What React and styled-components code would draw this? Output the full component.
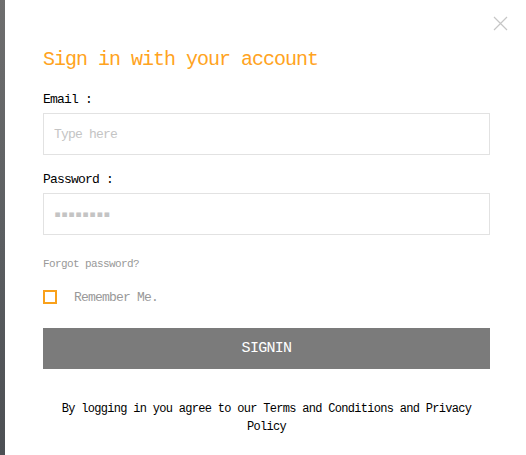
import React from "react";
import styled, { createGlobalStyle } from "styled-components";

const GlobalStyle = createGlobalStyle`
  html, body { margin: 0; padding: 0; background: #fff; }
  * { box-sizing: border-box; }
`;

const mono = `"Liberation Mono", "DejaVu Sans Mono", monospace`;

const Page = styled.div`
  display: flex;
  width: 526px;
  height: 455px;
  overflow: hidden;
`;

const Backdrop = styled.div`
  position: relative;
  width: 5px;
  flex-shrink: 0;
  background: linear-gradient(180deg, #6e6e6e 0%, #5c5f62 50%, #4c4f53 100%);
`;

const Modal = styled.div`
  position: relative;
  flex: 1;
  background: #fff;
  border-top-left-radius: 4px;
  padding: 47px 0 0 38px;
  font-family: ${mono};
`;

const CloseButton = styled.button`
  position: absolute;
  top: 16px;
  right: 18px;
  width: 15px;
  height: 15px;
  padding: 0;
  border: none;
  background: none;
  cursor: pointer;
  display: flex;
`;

const Form = styled.form`
  width: 447px;
  display: flex;
  flex-direction: column;
`;

const Title = styled.h2`
  margin: 0 0 18px;
  font-size: 20px;
  line-height: 26px;
  font-weight: normal;
  letter-spacing: -1px;
  color: #ffa321;
`;

const Label = styled.label`
  font-size: 13px;
  line-height: 18px;
  letter-spacing: -0.8px;
  color: #000;
  margin-bottom: 4px;
`;

const Input = styled.input`
  height: 42px;
  width: 100%;
  border: 1px solid #e2e2e2;
  border-radius: 0;
  padding: 0 10px;
  font-family: ${(p) => (p.$dots ? `"DejaVu Sans Mono", monospace` : mono)};
  font-size: ${(p) => (p.$dots ? "12px" : "13px")};
  letter-spacing: ${(p) => (p.$dots ? "-0.2px" : "-0.8px")};
  color: #333;
  outline: none;
  margin-bottom: ${(p) => p.$gap}px;
  &::placeholder {
    color: #c4c4c4;
  }
`;

const ForgotLink = styled.a`
  font-size: 11px;
  line-height: 16px;
  letter-spacing: -0.6px;
  color: #999;
  text-decoration: none;
  margin-bottom: 18px;
`;

const RememberRow = styled.label`
  display: flex;
  align-items: center;
  gap: 17px;
  height: 14px;
  margin-bottom: 24px;
  font-size: 13px;
  letter-spacing: -0.8px;
  color: #999;
`;

const CheckBox = styled.span`
  width: 14px;
  height: 14px;
  border: 2px solid #f9a11b;
  background: #fff;
  flex-shrink: 0;
`;

const SubmitButton = styled.button`
  height: 41px;
  width: 100%;
  border: none;
  background: #7b7b7b;
  color: #fff;
  font-family: ${mono};
  font-size: 15px;
  letter-spacing: -0.7px;
  margin-bottom: 31px;
  cursor: pointer;
`;

const Footer = styled.p`
  margin: 0;
  text-align: center;
  font-size: 12px;
  line-height: 18px;
  letter-spacing: -0.7px;
  color: #000;
`;

export default function App() {
  return (
    <>
      <GlobalStyle />
      <Page>
        <Backdrop />
        <Modal>
          <CloseButton type="button" aria-label="Close">
            <svg width="15" height="15" viewBox="0 0 15 15">
              <path d="M1 1 L14 14 M14 1 L1 14" stroke="#c6c6c6" strokeWidth="1.2" fill="none" />
            </svg>
          </CloseButton>
          <Form onSubmit={(e) => e.preventDefault()}>
            <Title>Sign in with your account</Title>
            <Label>Email :</Label>
            <Input $gap={16} placeholder="Type here" />
            <Label>Password :</Label>
            <Input $gap={21} $dots type="password" placeholder="▪▪▪▪▪▪▪▪" />
            <ForgotLink href="#">Forgot password?</ForgotLink>
            <RememberRow>
              <CheckBox />
              Remember Me.
            </RememberRow>
            <SubmitButton type="submit">SIGNIN</SubmitButton>
            <Footer>
              By logging in you agree to our Terms and Conditions and Privacy Policy
            </Footer>
          </Form>
        </Modal>
      </Page>
    </>
  );
}
